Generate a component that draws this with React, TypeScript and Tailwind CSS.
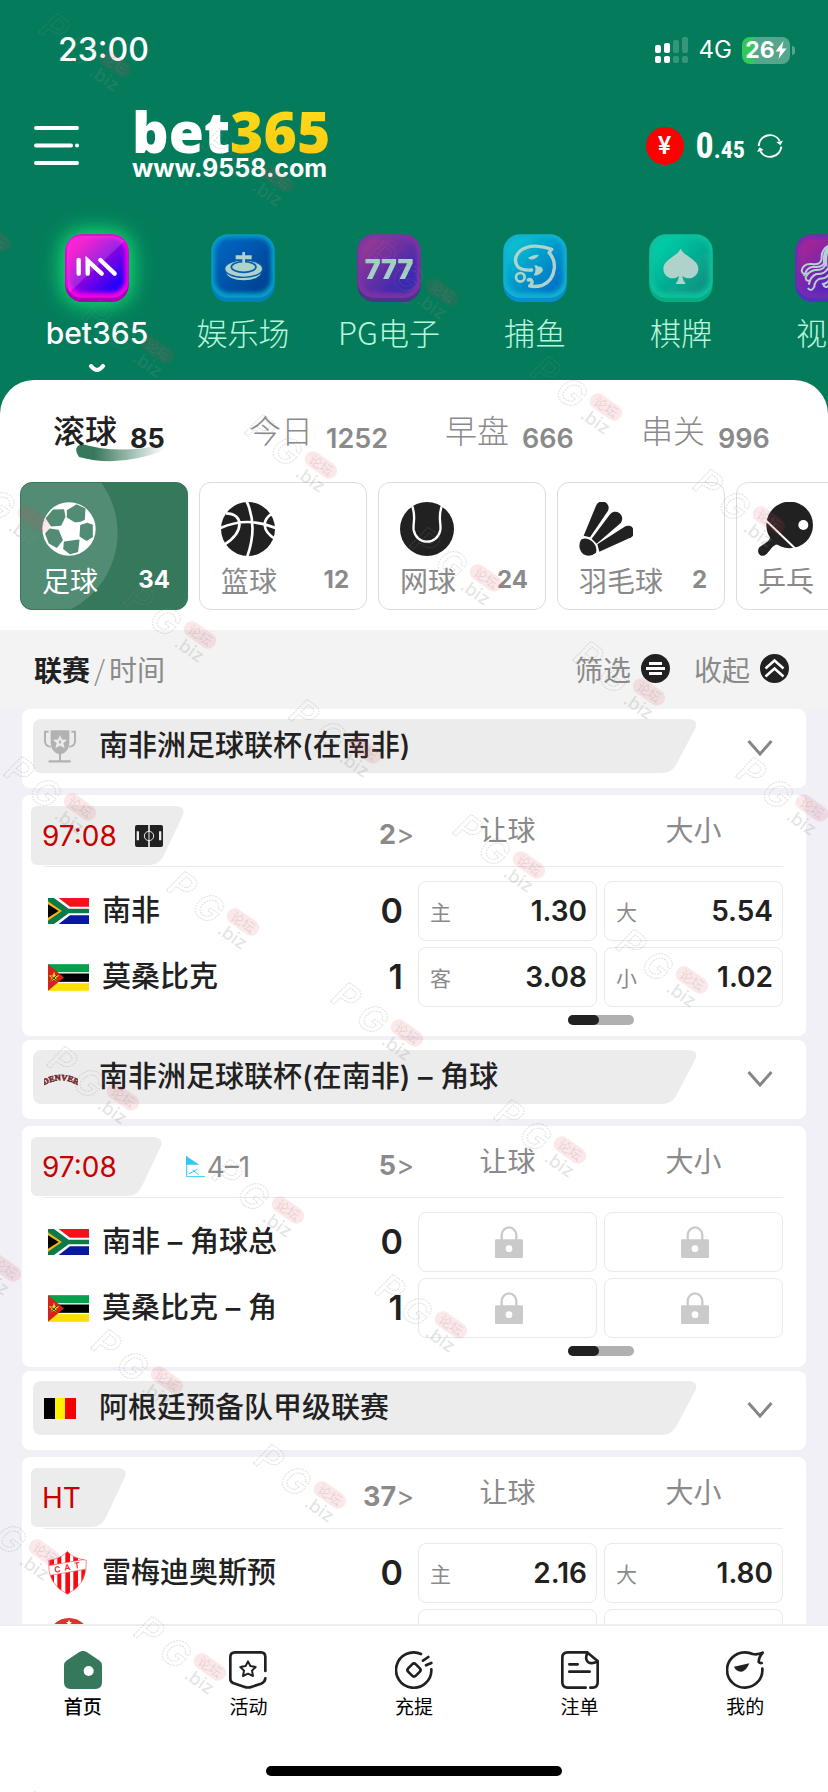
import React from "react";

const latin = "font-['Inter','Noto_Sans_CJK_SC',sans-serif]";
const cjk = "font-['Noto_Sans_CJK_SC',sans-serif]";

/* ---------- status bar ---------- */

function StatusBar() {
  return (
    <div className="flex h-[100px] items-center justify-between pr-[33px] pl-[58px] text-white">
      <span className="text-[32px] font-medium">23:00</span>
      <div className="flex items-center gap-[10px]">
        <svg width="34" height="27" viewBox="0 0 34 27" aria-hidden="true">
          <g fill="#fff">
            <rect x="0" y="8" width="6" height="8" rx="2" />
            <rect x="0" y="19" width="6" height="7" rx="2" />
            <rect x="9" y="6" width="6" height="10" rx="2" />
            <rect x="9" y="19" width="6" height="7" rx="2" />
          </g>
          <g fill="#fff" opacity="0.2">
            <rect x="18" y="3" width="6" height="13" rx="2" />
            <rect x="18" y="19" width="6" height="7" rx="2" />
            <rect x="27" y="0" width="6" height="16" rx="2" />
            <rect x="27" y="19" width="6" height="7" rx="2" />
          </g>
        </svg>
        <span className="text-[24px] leading-none">4G</span>
        <div className="flex items-center gap-[2px]">
          <div className="flex h-[27px] w-12 items-center justify-center rounded-lg bg-[linear-gradient(90deg,#34c759_25%,#54a68d_25%)]">
            <span className="text-[23px] leading-none font-bold">26</span>
            <svg width="12" height="18" viewBox="0 0 12 18" aria-hidden="true">
              <path d="M8.500 0 L0.500 10.500 H5 L3.500 18 L11.500 7.500 H7 Z" fill="#fff" />
            </svg>
          </div>
          <div className="h-[9px] w-[3px] rounded-r-full bg-[#54a68d]" />
        </div>
      </div>
    </div>
  );
}

/* ---------- brand header ---------- */

function Header() {
  return (
    <header className="flex h-[92px] items-center justify-between pr-[45px] pl-[34px] text-white">
      <div className="flex items-center gap-[52px]">
        <button type="button" aria-label="菜单">
          <svg width="46" height="40" viewBox="0 0 46 40" fill="none" stroke="#fff" strokeWidth="4" strokeLinecap="round">
            <path d="M2 2H43M2 19.500H37M43 19.500H43.010M2 37H43" />
          </svg>
        </button>
        <a href="#home" className="flex flex-col pb-1">
          <span className="font-['Noto_Sans','Open_Sans',sans-serif] text-[57px] leading-[46px] font-black">
            bet<span className="bg-linear-to-b from-[#ffdf1b] to-[#f9c70f] bg-clip-text text-transparent">365</span>
          </span>
          <span className="pt-[2px] text-[25px] leading-[24px] font-bold">www.9558.com</span>
        </a>
      </div>
      <div className="flex items-center gap-3">
        <span className="flex size-[38px] items-center justify-center rounded-full bg-[#fe0000] text-[24px] font-semibold">¥</span>
        <span className="font-['Liberation_Sans_Narrow','Roboto_Condensed','DejaVu_Sans_Condensed',sans-serif] leading-none font-bold">
          <span className="text-[36px]">0</span>
          <span className="text-[24px]">.45</span>
        </span>
        <button type="button" aria-label="刷新">
          <svg width="26" height="28" viewBox="0 0 78 84" fill="none" stroke="#fff" strokeWidth="6">
            <path d="M5 42A34 34 0 0 1 68 26" />
            <path d="M73 44A34 34 0 0 1 10 58" />
            <path d="M58 30L78 26L70 40Z M20 54L0 60L8 46Z" fill="#fff" stroke="none" />
          </svg>
        </button>
      </div>
    </header>
  );
}

/* ---------- category strip ---------- */

type TileProps = { id: string; from: string; to: string; edge: string; lip: string; children: React.ReactNode };

function Tile({ id, from, to, edge, lip, children }: TileProps) {
  return (
    <svg width="64" height="68" viewBox="0 0 192 204" aria-hidden="true">
      <defs>
        <linearGradient id={id} x1="0" y1="0" x2="1" y2="1">
          <stop offset="0.150" stopColor={from} />
          <stop offset="0.850" stopColor={to} />
        </linearGradient>
        <filter id={`${id}-soft`}>
          <feGaussianBlur stdDeviation="7" />
        </filter>
      </defs>
      <rect x="1" y="14" width="190" height="190" rx="50" fill={lip} />
      <rect x="1" y="1" width="190" height="190" rx="50" fill={edge} />
      <rect x="12" y="11" width="168" height="166" rx="42" fill={`url(#${id})`} filter={`url(#${id}-soft)`} />
      {children}
    </svg>
  );
}

const tiles = {
  sport: (
    <Tile id="t1" from="#f400c4" to="#2400fa" edge="#fa00e4" lip="#a800b8">
      <path d="M178 22L14 174Q6 150 6 100V52Q6 6 52 6H130Q160 6 178 22Z" fill="#fff" opacity="0.140" />
      <g stroke="#fff" strokeWidth="13" strokeLinecap="round" fill="none">
        <path d="M41 78V119M68 119V80L110 119M106 78L149 119" />
      </g>
    </Tile>
  ),
  casino: (
    <Tile id="t2" from="#0660c8" to="#043f9c" edge="#06a4d4" lip="#0481c4">
      <ellipse cx="98" cy="114" rx="52" ry="25" fill="#c2ddd8" />
      <ellipse cx="98" cy="104" rx="57" ry="26" fill="#c2ddd8" stroke="#0a58b4" strokeWidth="4" />
      <ellipse cx="98" cy="99" rx="37" ry="16" fill="none" stroke="#0a58b4" strokeWidth="5" />
      <path d="M94 54H102V64H122V76H102V90H94V76H74V64H94Z" fill="#c2ddd8" />
    </Tile>
  ),
  slots: (
    <Tile id="t3" from="#a0309c" to="#3a20bc" edge="#8e2cae" lip="#5a2a90">
      <text x="96" y="136" textAnchor="middle" fontFamily="Inter" fontWeight="900" fontSize="80" fill="#b4d8d4">777</text>
    </Tile>
  ),
  fishing: (
    <Tile id="t4" from="#08c4dc" to="#0074d4" edge="#14b8de" lip="#0890dc">
      <g fill="none" stroke="#c2ddd8" strokeWidth="10" strokeLinecap="round" strokeLinejoin="round">
        <path d="M86 108Q56 110 44 98Q28 74 50 52Q72 34 106 37Q126 38 146 46L138 56Q156 76 154 102Q150 140 118 154Q96 160 80 156Q90 150 86 140Q82 134 76 138" />
        <circle cx="52" cy="130" r="13" strokeWidth="8" />
      </g>
      <path d="M74 72Q88 62 108 62Q98 78 82 76ZM94 94Q104 94 106 98Q118 96 120 110Q108 126 92 124Q102 110 94 94Z" fill="#c2ddd8" />
    </Tile>
  ),
  cards: (
    <Tile id="t5" from="#04d4ae" to="#089a88" edge="#10c8a4" lip="#04b488">
      <path d="M95 44C104 66 148 76 148 104C148 128 120 142 100 126Q101 140 110 150H80Q89 140 90 126C70 142 43 128 43 104C43 76 86 66 95 44Z" fill="#c2ddd8" />
    </Tile>
  ),
  live: (
    <Tile id="t6" from="#b41e9c" to="#4a20d4" edge="#8024bc" lip="#5a28c8">
      <g fill="none" stroke="#cbd8e4" strokeWidth="6" strokeLinecap="round">
        <path d="M106 32Q78 44 80 74Q78 94 50 90Q24 88 20 110Q22 124 38 118" />
        <path d="M98 46Q86 60 88 84Q84 102 56 98Q34 100 28 124" />
        <path d="M92 88Q88 110 60 108Q40 112 32 130Q32 142 44 140" />
        <path d="M98 104Q88 122 64 120Q46 128 42 150" />
        <path d="M104 112Q100 134 74 134Q58 142 58 158Q50 174 40 164" />
        <path d="M106 130Q100 148 84 150Q90 164 100 156" />
      </g>
      <path d="M110 26Q80 44 84 86L98 100Q92 60 110 26ZM130 40Q170 40 170 90Q160 130 120 150Q134 110 116 96Q100 84 130 40Z" fill="#cbd8e4" />
    </Tile>
  ),
};

const categories = [
  { label: "bet365", tile: tiles.sport, active: true },
  { label: "娱乐场", tile: tiles.casino },
  { label: "PG电子", tile: tiles.slots },
  { label: "捕鱼", tile: tiles.fishing },
  { label: "棋牌", tile: tiles.cards },
  { label: "视讯", tile: tiles.live },
];

function Categories() {
  return (
    <nav className="flex overflow-hidden pt-[42px] pb-[6px] pl-[24px]">
      {categories.map((c) => (
        <button type="button" key={c.label} className="flex w-[146px] shrink-0 flex-col items-center">
          <span className={c.active ? "rounded-[20px] shadow-[0_0_20px_4px_#12e070]" : "opacity-90"}>{c.tile}</span>
          <span
            className={
              c.active
                ? "mt-[11px] text-[30px] leading-[40px] font-medium text-white"
                : `${cjk} mt-[10px] text-[31px] leading-[40px] font-light whitespace-nowrap text-[#b9f6dc]`
            }
          >
            {c.label}
          </span>
          {c.active && (
            <svg className="mt-[11px]" width="18" height="10" viewBox="0 0 18 10" fill="none" aria-hidden="true">
              <path d="M3 2Q9 10 15 2" stroke="#fff" strokeWidth="4" strokeLinecap="round" />
            </svg>
          )}
        </button>
      ))}
    </nav>
  );
}

/* ---------- period tabs ---------- */

const tabs = [
  { label: "滚球", count: 85, active: true },
  { label: "今日", count: 1252 },
  { label: "早盘", count: 666 },
  { label: "串关", count: 996 },
];

function Tabs() {
  return (
    <div className="flex overflow-hidden pt-[29px] pb-[23px] pl-[53px]">
      {tabs.map((t) => (
        <button type="button" key={t.label} className="relative flex h-[50px] w-[196px] shrink-0 items-start gap-[13px]">
          {t.active && (
            <svg className="absolute top-[35px] left-[22px]" width="90" height="20" viewBox="0 0 90 20" aria-hidden="true">
              <defs>
                <linearGradient id="swoosh">
                  <stop offset="0.200" stopColor="#36785b" />
                  <stop offset="1" stopColor="#36785b" stopOpacity="0" />
                </linearGradient>
              </defs>
              <path d="M7 0Q44 11 90 0V6Q44 24 4 13Q-3 3 7 0Z" fill="url(#swoosh)" />
            </svg>
          )}
          <span className={`${cjk} relative text-[32px] leading-[40px] ${t.active ? "font-medium text-[#212121]" : "font-light text-[#8a8a8a]"}`}>
            {t.label}
          </span>
          <span className={`relative pt-3 text-[27px] leading-[36px] ${t.active ? "font-bold text-[#212121]" : "font-semibold text-[#8a8a8a]"}`}>
            {t.count}
          </span>
        </button>
      ))}
    </div>
  );
}

/* ---------- sport cards ---------- */

const ink = "#212121";

const sportIcons = {
  soccer: (
    <svg width="54" height="54" viewBox="0 0 162 162" aria-hidden="true">
      <circle cx="81" cy="81" r="80" fill="#fff" />
      <g fill="#528c74" stroke="#528c74" strokeWidth="5" strokeLinejoin="round">
        <path d="M77 26L104 10L128 21L126 52Q112 60 98 58L77 45Z" />
        <path d="M14 49L34 25L64 24L68 44L56 69L28 71Z" />
        <path d="M117 71L137 65L150 70V104L134 114L115 102Z" />
        <path d="M68 121L110 115L106 148L84 154L66 140Z" />
        <path d="M24 82L48 86L60 114L44 135L22 122L12 95Z" />
      </g>
    </svg>
  ),
  basketball: (
    <svg width="54" height="54" viewBox="0 0 162 162" aria-hidden="true">
      <circle cx="81" cy="81" r="81" fill={ink} />
      <g fill="none" stroke="#fff" strokeWidth="8">
        <path d="M76 -4Q112 72 78 166M-2 78Q80 42 164 78M14 34C70 34 70 90 10 128M154 34C122 54 122 86 164 112" />
      </g>
    </svg>
  ),
  tennis: (
    <svg width="54" height="54" viewBox="0 0 162 162" aria-hidden="true">
      <circle cx="81" cy="81" r="81" fill={ink} />
      <path d="M35 8C50 44 38 60 41 84C45 106 62 119 81 119C100 119 117 106 121 84C124 60 112 44 127 8" fill="none" stroke="#fff" strokeWidth="7" />
    </svg>
  ),
  shuttle: (
    <svg width="54" height="54" viewBox="0 0 162 162" aria-hidden="true">
      <g fill={ink}>
        <path d="M14 101L52 9A18 18 0 0 1 87 26L33 106Z" />
        <path d="M38 110L92 38A20 20 0 0 1 126 62L53 125Z" />
        <path d="M55 127L137 74A18 18 0 0 1 157 106L61 149Z" />
        <path d="M6 113Q22 104 38 117Q56 132 51 152Q32 168 12 156Q-6 136 6 113Z" />
      </g>
    </svg>
  ),
  pingpong: (
    <svg width="56" height="54" viewBox="0 0 168 162" aria-hidden="true">
      <circle cx="95" cy="69" r="70" fill={ink} />
      <path d="M38 96L68 126Q54 124 44 134L26 156Q14 166 5 158Q-4 148 4 136L30 118Q40 108 38 96Z" fill={ink} />
      <path d="M20 52L114 142" stroke="#fff" strokeWidth="6" />
      <circle cx="136" cy="69" r="15" fill="#fff" />
    </svg>
  ),
};

const sports = [
  { label: "足球", count: "34", icon: sportIcons.soccer, active: true },
  { label: "篮球", count: "12", icon: sportIcons.basketball },
  { label: "网球", count: "24", icon: sportIcons.tennis },
  { label: "羽毛球", count: "2", icon: sportIcons.shuttle },
  { label: "乒乓", count: "", icon: sportIcons.pingpong },
];

function Sports() {
  return (
    <div className="flex gap-[11px] overflow-hidden pb-5 pl-5">
      {sports.map((s) => (
        <button
          type="button"
          key={s.label}
          className={`flex h-32 w-[168px] shrink-0 flex-col rounded-xl border pt-[19px] pr-[17px] pl-[21px] text-left ${
            s.active
              ? "border-[#36785b] bg-[#36785b] bg-[radial-gradient(circle_at_11px_50px,#528c74_85px,transparent_86px)]"
              : "border-[#dcdcdc] bg-white"
          }`}
        >
          {s.icon}
          <span className="mt-[5px] flex w-full items-center justify-between">
            <span className={`${cjk} text-[28px] leading-[38px] whitespace-nowrap ${s.active ? "text-white" : "text-[#8a8a8a]"}`}>{s.label}</span>
            <span className={`text-[24px] leading-[38px] font-bold ${s.active ? "text-white" : "text-[#8a8a8a]"}`}>{s.count}</span>
          </span>
        </button>
      ))}
    </div>
  );
}

/* ---------- sort and filter row ---------- */

function FilterBar() {
  return (
    <div className={`${cjk} flex h-[79px] items-center justify-between bg-[#f3f3f3] pr-[39px] pb-[2px] pl-[34px] text-[28px] text-[#8a8a8a]`}>
      <div className="flex items-center">
        <button type="button" className="font-bold text-[#212121]">联赛</button>
        <span className="px-1 font-light">/</span>
        <button type="button">时间</button>
      </div>
      <div className="flex items-center gap-[24px]">
        <button type="button" className="flex items-center gap-[10px]">
          筛选
          <svg width="29" height="29" viewBox="0 0 29 29" fill="none" stroke="#fff" strokeWidth="3" aria-hidden="true">
            <circle cx="14.500" cy="14.500" r="14.500" fill={ink} stroke="none" />
            <path d="M8 9.500H21M5 14.500H24M8 19.500H21" />
          </svg>
        </button>
        <button type="button" className="flex items-center gap-[10px]">
          收起
          <svg width="29" height="29" viewBox="0 0 29 29" fill="none" stroke="#fff" strokeWidth="2.500" aria-hidden="true">
            <circle cx="14.500" cy="14.500" r="14.500" fill={ink} stroke="none" />
            <path d="M5.500 14.500L14.500 6.500L23.500 14.500M5.500 22.500L14.500 14.500L23.500 22.500" />
          </svg>
        </button>
      </div>
    </div>
  );
}

/* ---------- flags and badges ---------- */

const southAfrica = (
  <svg width="41" height="26" viewBox="0 0 123 78" aria-hidden="true">
    <rect width="123" height="78" fill="#fff" />
    <path d="M32 0H123V26H66Z" fill="#f8101c" />
    <path d="M32 78H123V52H66Z" fill="#0418a0" />
    <path d="M0 0H18L62 32H123V46H62L18 78H0Z" fill="#0a7a4a" />
    <path d="M0 10L42 39L0 68Z" fill="#f8b414" />
    <path d="M0 19L32 39L0 59Z" fill="#000" />
  </svg>
);

const mozambique = (
  <svg width="41" height="27" viewBox="0 0 123 80" aria-hidden="true">
    <rect width="123" height="80" fill="#fff" />
    <rect width="123" height="24" fill="#04a04c" />
    <rect y="28" width="123" height="25" fill="#000" />
    <rect y="57" width="123" height="23" fill="#fde000" />
    <path d="M0 0L48 40L0 80Z" fill="#d8201c" />
    <path d="M18 22L22 34L34 34L24 41L28 53L18 46L7 53L11 41L2 34L14 34Z" fill="#fde000" />
    <path d="M8 50L28 32M10 36L28 50" stroke="#222" strokeWidth="3" />
  </svg>
);

const belgium = (
  <svg width="32" height="21" viewBox="0 0 32 21" aria-hidden="true">
    <rect width="11" height="21" fill="#000" />
    <rect x="11" width="10" height="21" fill="#fff000" />
    <rect x="21" width="11" height="21" fill="#f40000" />
  </svg>
);

const trophy = (
  <svg width="32" height="33" viewBox="0 0 96 98" aria-hidden="true">
    <path d="M20 0H76V36Q76 64 51 72V90H80V97H14V90H45V72Q20 64 20 36Z" fill="#b2b2b2" />
    <path d="M14 5H3V34Q4 48 20 50M82 5H93V34Q92 48 76 50" fill="none" stroke="#b2b2b2" strokeWidth="6" />
    <path d="M48 15L54 28L69 29L58 39L62 54L48 46L34 54L38 39L27 29L42 28Z" fill="#ececec" />
    <path d="M48 28L52 37L50 40H46L44 37Z" fill="#b2b2b2" />
  </svg>
);

const denver = (
  <svg width="34" height="18" viewBox="0 0 102 54" aria-hidden="true">
    <defs>
      <path id="denver-arc" d="M0 52Q50 22 102 52" />
    </defs>
    <text fontFamily="Liberation Serif" fontWeight="700" fontSize="25" fill="#a03038" stroke="#6c2c30" strokeWidth="2">
      <textPath href="#denver-arc" startOffset="50%" textAnchor="middle">DENVER</textPath>
    </text>
  </svg>
);

const crest = (
  <svg width="39" height="44" viewBox="0 0 117 132" aria-hidden="true">
    <defs>
      <clipPath id="shield">
        <path d="M58 1Q74 22 115 28Q120 98 58 130Q-4 98 2 28Q42 22 58 1Z" />
      </clipPath>
    </defs>
    <g clipPath="url(#shield)">
      <rect width="117" height="132" fill="#fff" />
      <path d="M4 0H18V132H4ZM28 0H40V132H28ZM52 0H66V132H52ZM76 0H90V132H76ZM100 0H112V132H100Z" fill="#f80810" />
      <path d="M0 44L117 24V54L0 74Z" fill="#fff" stroke="#f86068" strokeWidth="2" />
    </g>
    <path d="M58 1Q74 22 115 28Q120 98 58 130Q-4 98 2 28Q42 22 58 1Z" fill="none" stroke="#f86068" strokeWidth="2" />
    <g fontFamily="Inter" fontWeight="600" fontSize="25" fill="#f02028">
      <text x="20" y="65" transform="rotate(-8 20 65)">C</text>
      <text x="50" y="59" transform="rotate(-8 50 59)">A</text>
      <text x="80" y="53" transform="rotate(-8 80 53)">T</text>
    </g>
  </svg>
);

const redBadge = (
  <svg width="42" height="42" viewBox="0 0 42 42" aria-hidden="true">
    <circle cx="21" cy="21" r="21" fill="#dc3428" />
    <circle cx="21" cy="21" r="14" fill="#2a1a18" />
    <path d="M21 1.500L22 4L24 4L22.500 5.500L23 7.500L21 6L19 7.500L19.500 5.500L18 4L20 4Z" fill="#fff" />
  </svg>
);

/* ---------- leagues and matches ---------- */

function League({ icon, name }: { icon: React.ReactNode; name: string }) {
  return (
    <section className="flex h-[79px] items-start justify-between rounded-lg bg-white pt-[10px] pr-[33px] pl-[11px]">
      <div className="flex flex-1">
        <div className="flex h-[54px] flex-1 items-center rounded-l-lg bg-[#ececec] pl-[11px]">
          <span className="flex w-[55px] shrink-0 items-center">{icon}</span>
          <h2 className="text-[29px] leading-[54px] font-medium whitespace-nowrap text-[#212121]">{name}</h2>
        </div>
        <svg className="-ml-px shrink-0" width="41" height="54" viewBox="0 0 41 54" aria-hidden="true">
          <path d="M0 0H33Q42 1 40 8L20 46Q15 54 6 54H0Z" fill="#ececec" />
        </svg>
      </div>
      <button type="button" aria-label="展开" className="mt-5 ml-[50px]">
        <svg width="26" height="18" viewBox="0 0 26 18" fill="none" aria-hidden="true">
          <path d="M1.500 2L13 15L24.500 2" stroke="#868686" strokeWidth="3" />
        </svg>
      </button>
    </section>
  );
}

const pitch = (
  <svg width="28" height="22" viewBox="0 0 84 66" aria-hidden="true">
    <rect width="84" height="66" rx="6" fill={ink} />
    <g fill="none" stroke="#ececec">
      <path d="M42 0V66" strokeWidth="5" />
      <circle cx="42" cy="33" r="14" strokeWidth="3" fill={ink} />
      <path d="M42 20V46" strokeWidth="3" />
    </g>
    <path d="M5 19H12V46H5ZM72 19H79V46H72Z" fill="#ececec" />
  </svg>
);

const lock = (
  <svg width="28" height="32" viewBox="0 0 84 96" aria-hidden="true">
    <path d="M20 44V28A22 24 0 0 1 64 28V44" fill="none" stroke="#cacaca" strokeWidth="7" />
    <rect y="40" width="84" height="56" rx="4" fill="#cacaca" />
    <circle cx="42" cy="68" r="10" fill="#fff" />
  </svg>
);

type Odd = { side: string; value: string } | "locked" | "blank";

function OddButton({ odd }: { odd: Odd }) {
  return (
    <button
      type="button"
      aria-label={odd === "locked" ? "已锁定" : undefined}
      className="flex h-[60px] flex-1 items-center rounded-lg border border-[#eaeaea] bg-white pr-[9px] pl-[11px]"
    >
      {odd === "locked" && <span className="mx-auto">{lock}</span>}
      {typeof odd === "object" && (
        <span className="flex w-full items-center justify-between">
          <span className={`${cjk} text-[21px] leading-[28px] text-[#8a8a8a]`}>{odd.side}</span>
          <span className="text-[28px] font-semibold text-[#212121]">{odd.value}</span>
        </span>
      )}
    </button>
  );
}

type Team = { icon: React.ReactNode; name: string; score: string; odds: Odd[] };
type MatchProps = { time: string; live?: boolean; corners?: string; markets: string; teams: Team[] };

function Match({ time, live, corners, markets, teams }: MatchProps) {
  return (
    <section className="h-[241px] rounded-lg bg-white pt-[11px] pr-[23px] pl-[9px]">
      <div className="flex h-[60px]">
        <div className="flex h-[59px] flex-1">
          <div className={`flex items-center rounded-l-md bg-[#ececec] pl-[11px] ${live ? "" : "pr-3"}`}>
            <span className="text-[28px] text-[#c80000]">{time}</span>
            {live && <span className="relative z-10 -mr-3 ml-[18px]">{pitch}</span>}
          </div>
          <svg className="-ml-px" width="34" height="59" viewBox="0 0 34 59" aria-hidden="true">
            <path d="M0 0H26Q36 1 33 9L15 47Q10 59 0 59Z" fill="#ececec" />
          </svg>
          {corners && (
            <span className="ml-6 flex items-center gap-[2px] text-[28px] text-[#8a8a8a]">
              <svg width="19" height="22" viewBox="0 0 57 66" aria-hidden="true">
                <path d="M0 0L40 26H0Z" fill="#34c8f4" />
                <path d="M2 0V62H57M8 54L34 40M20 42L38 56" fill="none" stroke="#34c8f4" strokeWidth="3" />
              </svg>
              {corners}
            </span>
          )}
          <button type="button" className="ml-auto pr-1 text-[27px] font-bold text-[#8a8a8a]">
            {markets}<span className="font-normal">&gt;</span>
          </button>
        </div>
        <div className={`${cjk} flex w-[365px] shrink-0 gap-[7px] pb-[14px] text-[28px] text-[#8a8a8a]`}>
          <span className="flex flex-1 items-center justify-center">让球</span>
          <span className="flex flex-1 items-center justify-center">大小</span>
        </div>
      </div>
      <div className="mb-[14px] ml-[13px] h-px bg-[#eaeaea]" />
      <div className="flex flex-col gap-[6px]">
        {teams.map((t, i) => (
          <div key={i} className="flex items-center">
            <div className="flex flex-1 items-center pr-[15px] pl-[17px]">
              <span className="flex w-[54px] items-center">{t.icon}</span>
              <span className="text-[29px] leading-[60px] font-medium whitespace-nowrap text-[#212121]">{t.name}</span>
              <span className="ml-auto text-[34px] leading-[60px] font-semibold text-[#212121]">{t.score}</span>
            </div>
            <div className="flex w-[365px] shrink-0 gap-[7px]">
              {t.odds.map((o, j) => (
                <OddButton key={j} odd={o} />
              ))}
            </div>
          </div>
        ))}
      </div>
      <div className="flex w-full justify-end pt-2">
        <div className="mr-[149px] h-[10px] w-[66px] rounded-full bg-[#b0b0b0]">
          <div className="h-full w-[31px] rounded-full bg-[#212121]" />
        </div>
      </div>
    </section>
  );
}

/* ---------- bottom navigation ---------- */

const navItems = [
  {
    label: "首页",
    active: true,
    icon: (
      <>
        <path d="M45 4Q57 -4 69 4L105 28Q114 34 114 44V94Q114 114 94 114H20Q0 114 0 94V44Q0 34 9 28Z" fill="#36785b" stroke="none" />
        <circle cx="74" cy="60" r="15" fill="#fff" stroke="none" />
      </>
    ),
  },
  {
    label: "活动",
    icon: (
      <>
        <path d="M109 60V18Q109 4 96 4H18Q4 4 4 18V84Q4 92 12 96L45 107Q57 112 69 107L96 98Q108 93 109 82" />
        <path d="M57 31L64 45L80 48L69 59L72 75L57 68L42 75L45 59L34 48L50 45Z" strokeWidth="6" />
      </>
    ),
  },
  {
    label: "充提",
    icon: (
      <>
        <path d="M78 9A53 53 0 1 0 109 55M84 29L100 18M93 43L109 36" />
        <rect x="41" y="41" width="32" height="32" rx="8" transform="rotate(45 57 57)" />
      </>
    ),
  },
  {
    label: "注单",
    icon: (
      <>
        <path d="M74 110H20Q4 110 4 94V20Q4 4 20 4H78L110 30V94Q110 110 95 110H88" />
        <path d="M80 6C70 22 78 40 96 36L110 32M25 40H50M25 62H86" />
      </>
    ),
  },
  {
    label: "我的",
    icon: (
      <>
        <path d="M109 53A53 53 0 1 1 57 4Q70 4 80 9Q96 12 110 5Q98 20 98 33Q102 37 107 36" />
        <path d="M24 47L70 37Q62 58 48 62Q30 62 24 47Z" fill={ink} stroke="none" />
      </>
    ),
  },
];

function BottomNav() {
  return (
    <div className="flex h-[168px] shrink-0 flex-col items-center justify-between border-t-2 border-[#eeeeee] bg-white pb-4">
      <nav className="grid w-full grid-cols-5 pt-[25px]">
        {navItems.map((n) => (
          <a key={n.label} href="#nav" className="flex flex-col items-center gap-px">
            <svg width="38" height="38" viewBox="0 0 114 114" fill="none" stroke={ink} strokeWidth="8" strokeLinecap="round" strokeLinejoin="round" aria-hidden="true">
              {n.icon}
            </svg>
            <span className={`${cjk} text-[19px] leading-[32px] text-black ${n.active ? "font-medium" : ""}`}>{n.label}</span>
          </a>
        ))}
      </nav>
      <div className="h-[10px] w-[296px] rounded-full bg-black" />
    </div>
  );
}

/* ---------- watermark layer ---------- */

const marks: [number, number][] = [
  [115, 64], [278, 179], [442, 292], [606, 407], [769, 520],
  [-5, 238], [158, 350], [321, 465], [486, 578], [649, 692], [812, 808],
  [34, 519], [200, 635], [365, 750], [529, 865], [692, 980],
  [80, 807], [243, 922], [407, 1033], [570, 1150],
  [123, 1097], [288, 1210], [451, 1325],
  [5, 1268], [167, 1380], [330, 1495],
  [45, 1553], [210, 1667], [93, 1842],
];

function Watermark() {
  return (
    <svg className="pointer-events-none absolute inset-0 z-20 h-full w-full" aria-hidden="true">
      {marks.map(([x, y]) => (
        <g key={`${x}-${y}`} transform={`translate(${x} ${y}) rotate(35)`}>
          <g fontFamily="Inter" fontWeight="600" fontStyle="italic" fontSize="36" fill="none" stroke="#888" strokeOpacity="0.280" strokeWidth="1" strokeDasharray="2 1">
            <text x="-82" y="18">P</text>
            <text x="-50" y="21">G</text>
          </g>
          <rect x="-18" y="-8" width="36" height="16" rx="8" fill="#e83848" fillOpacity="0.120" />
          <text y="5" textAnchor="middle" fontFamily="Noto Sans CJK SC" fontSize="13" fill="#888" fillOpacity="0.220">论坛</text>
          <text x="-16" y="24" fontFamily="Inter" fontWeight="500" fontSize="18" fill="#888" fillOpacity="0.220">.biz</text>
        </g>
      ))}
    </svg>
  );
}

export default function App() {
  return (
    <div className={`${latin} relative flex h-screen flex-col overflow-hidden bg-[#f0f0f6]`}>
      <main className="min-h-0 flex-1 overflow-hidden">
        <div className="bg-[#047c5b]">
          <StatusBar />
          <Header />
          <Categories />
          <div className="rounded-t-[34px] bg-white">
            <Tabs />
            <Sports />
          </div>
        </div>
        <FilterBar />
        <div className="flex flex-col gap-1 px-[22px]">
          <div className="flex flex-col gap-[7px]">
            <League icon={trophy} name="南非洲足球联杯(在南非)" />
            <Match
              time="97:08"
              live
              markets="2"
              teams={[
                { icon: southAfrica, name: "南非", score: "0", odds: [{ side: "主", value: "1.30" }, { side: "大", value: "5.54" }] },
                { icon: mozambique, name: "莫桑比克", score: "1", odds: [{ side: "客", value: "3.08" }, { side: "小", value: "1.02" }] },
              ]}
            />
          </div>
          <div className="flex flex-col gap-[7px]">
            <League icon={denver} name="南非洲足球联杯(在南非) – 角球" />
            <Match
              time="97:08"
              corners="4–1"
              markets="5"
              teams={[
                { icon: southAfrica, name: "南非 – 角球总", score: "0", odds: ["locked", "locked"] },
                { icon: mozambique, name: "莫桑比克 – 角", score: "1", odds: ["locked", "locked"] },
              ]}
            />
          </div>
          <div className="flex flex-col gap-[7px]">
            <League icon={belgium} name="阿根廷预备队甲级联赛" />
            <Match
              time="HT"
              markets="37"
              teams={[
                { icon: crest, name: "雷梅迪奥斯预", score: "0", odds: [{ side: "主", value: "2.16" }, { side: "大", value: "1.80" }] },
                { icon: redBadge, name: "", score: "", odds: ["blank", "blank"] },
              ]}
            />
          </div>
        </div>
      </main>
      <BottomNav />
      <Watermark />
    </div>
  );
}
